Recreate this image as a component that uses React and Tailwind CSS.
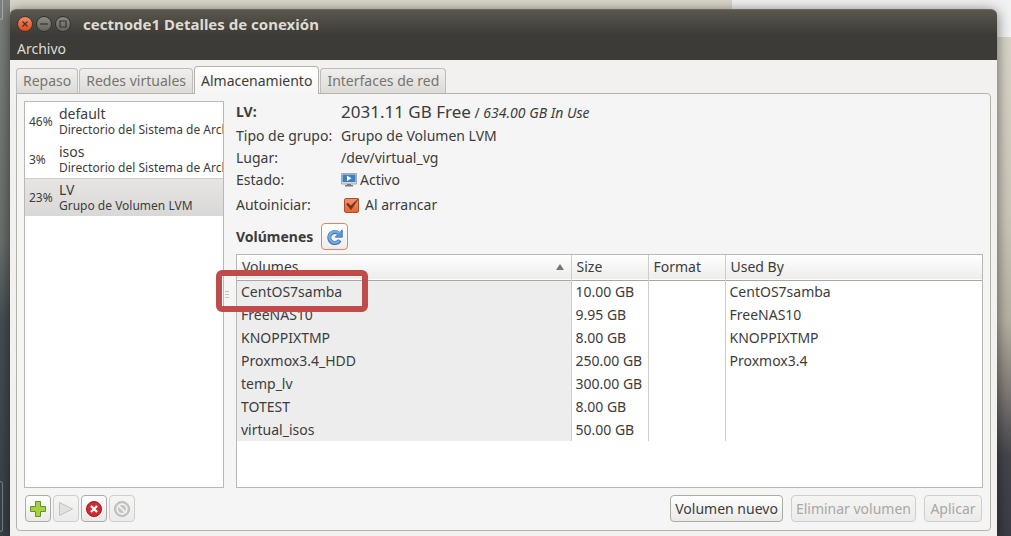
const pools = [
  { used: "46%", name: "default", type: "Directorio del Sistema de Archivos" },
  { used: "3%", name: "isos", type: "Directorio del Sistema de Archivos" },
  { used: "23%", name: "LV", type: "Grupo de Volumen LVM", selected: true },
];

const volumes = [
  { name: "CentOS7samba", size: "10.00 GB", usedBy: "CentOS7samba" },
  { name: "FreeNAS10", size: "9.95 GB", usedBy: "FreeNAS10" },
  { name: "KNOPPIXTMP", size: "8.00 GB", usedBy: "KNOPPIXTMP" },
  { name: "Proxmox3.4_HDD", size: "250.00 GB", usedBy: "Proxmox3.4" },
  { name: "temp_lv", size: "300.00 GB", usedBy: "" },
  { name: "TOTEST", size: "8.00 GB", usedBy: "" },
  { name: "virtual_isos", size: "50.00 GB", usedBy: "" },
];

const tabs = ["Repaso", "Redes virtuales", "Almacenamiento", "Interfaces de red"];

function WindowButton({ label, close, children }) {
  return (
    <button
      type="button"
      aria-label={label}
      className={
        close
          ? "h-4 w-4 rounded-full border border-[#3a3631] bg-linear-to-b from-[#f58a63] to-[#dd4814]"
          : "h-4 w-4 rounded-full border border-[#33322e] bg-linear-to-b from-[#8b8a83] to-[#64635d]"
      }
    >
      <svg viewBox="0 0 14 14" className="h-full w-full" fill="none" stroke="#37352f" strokeWidth="1.2">
        {children}
      </svg>
    </button>
  );
}

function TitleBar() {
  return (
    <header className="rounded-t-md border-t border-[#6b685e] bg-linear-to-b from-[#5a574d] via-[#3c3b37] to-[#3c3b37] text-[#dfdbd2]">
      <div className="flex h-7 items-center pl-[7px]">
        <div className="flex gap-[3px]">
          <WindowButton label="Cerrar" close>
            <path d="M4.500 4.500l5 5M9.500 4.500l-5 5" />
          </WindowButton>
          <WindowButton label="Minimizar">
            <path d="M3 7h8" />
          </WindowButton>
          <WindowButton label="Maximizar">
            <path d="M4 4h6v6h-6z" />
          </WindowButton>
        </div>
        <h1 className="ml-3 text-[15px] leading-5 font-bold">cectnode1 Detalles de conexión</h1>
      </div>
      <nav className="flex h-[22px] items-center pl-[7px]">
        <button type="button" className="text-sm leading-5">Archivo</button>
      </nav>
    </header>
  );
}

function Tabs() {
  return (
    <div role="tablist" className="relative z-10 flex items-end gap-px">
      {tabs.map((tab) => (
        <button
          key={tab}
          type="button"
          role="tab"
          aria-selected={tab === "Almacenamiento"}
          className={
            tab === "Almacenamiento"
              ? "-mb-px h-[28px] rounded-t border border-b-0 border-[#b5b2ac] bg-linear-to-b from-white to-[#f5f5f5] px-1.5 text-sm text-[#3c3c3c]"
              : "h-[25px] rounded-t border border-b-0 border-[#bfbdb8] bg-linear-to-b from-[#f0efed] to-[#dddbd8] px-1.5 text-sm text-[#77746e]"
          }
        >
          {tab}
        </button>
      ))}
    </div>
  );
}

function PoolList() {
  return (
    <ul className="w-[200px] shrink-0 overflow-hidden border border-[#bab8b3] bg-white">
      {pools.map((pool) => (
        <li
          key={pool.name}
          className={
            pool.selected
              ? "flex h-[38px] items-center border-t border-[#cfcdca] bg-linear-to-b from-[#e6e5e4] to-[#d9d8d6] pl-1"
              : "flex h-[38px] items-center border-t border-transparent pl-1"
          }
        >
          <span className="w-[30px] shrink-0 text-xs">{pool.used}</span>
          <div className="min-w-0 flex-1 overflow-hidden whitespace-nowrap">
            <div className="text-sm leading-4">{pool.name}</div>
            <div className="overflow-hidden text-xs leading-4">{pool.type}</div>
          </div>
        </li>
      ))}
    </ul>
  );
}

function PaneHandle() {
  return (
    <div role="separator" aria-orientation="vertical" className="flex w-3 flex-col justify-center gap-0.5 pl-px">
      <span className="h-px w-1 bg-[#c4c2be]" />
      <span className="h-px w-1 bg-[#c4c2be]" />
      <span className="h-px w-1 bg-[#c4c2be]" />
    </div>
  );
}

function MonitorIcon() {
  return (
    <svg viewBox="0 0 16 14" className="h-3.5 w-4">
      <path d="M0.500 0.500h15v10.500h-15z" fill="#d6d9dc" stroke="#a3a8ac" />
      <path d="M1.500 1.500h13v7.500h-13z" fill="#3f7fbe" />
      <path d="M6 2.500l4.500 2.800-4.500 2.800z" fill="#fff" />
      <path d="M6 11h4v1h2v1.500h-8v-1.500h2z" fill="#777c80" />
    </svg>
  );
}

function RefreshIcon() {
  return (
    <svg viewBox="0 0 16 16" className="h-4 w-4">
      <path
        d="M12.800 11.200A5.600 5.600 0 1 1 11.500 4.200"
        fill="none"
        stroke="#3a73b4"
        strokeWidth="4"
      />
      <path d="M15.300 0.800v7.400H8.200z" fill="#5b96d2" stroke="#3a73b4" strokeWidth="0.800" strokeLinejoin="round" />
      <path
        d="M12.300 11.700A5.600 5.600 0 1 1 12.200 4.500"
        fill="none"
        stroke="#74abe2"
        strokeWidth="2.400"
      />
    </svg>
  );
}

function PoolDetails() {
  return (
    <div className="grid grid-cols-[105px_1fr] text-sm leading-[22px]">
      <span className="pb-0.5 font-bold">LV:</span>
      <span className="h-6">
        <span className="text-[17px] leading-[22px]">2031.11 GB Free</span> / <i>634.00 GB In Use</i>
      </span>
      <span>Tipo de grupo:</span>
      <span>Grupo de Volumen LVM</span>
      <span>Lugar:</span>
      <span>/dev/virtual_vg</span>
      <span>Estado:</span>
      <span className="flex items-center gap-[3px]">
        <MonitorIcon />
        Activo
      </span>
      <span className="leading-7">Autoiniciar:</span>
      <label className="flex items-center gap-1.5 pl-[3px] leading-7">
        <span className="relative h-[15px] w-[15px]">
          <input
            type="checkbox"
            defaultChecked
            className="block h-[15px] w-[15px] appearance-none rounded-xs border border-[#a8502e] bg-linear-to-b from-[#f5916b] to-[#e8642f]"
          />
          <svg viewBox="0 0 16 16" className="pointer-events-none absolute inset-0 overflow-visible">
            <path d="M2.500 6.500L4.500 5.500 7 8.500 15.500 0.500 7.500 12.500z" fill="#6b3524" stroke="#6b3524" strokeWidth="0.500" />
          </svg>
        </span>
        Al arrancar
      </label>
    </div>
  );
}

function VolumeTable() {
  return (
    <div className="relative flex-1 border border-[#bab8b3] bg-white">
      <table className="w-full table-fixed border-collapse text-left text-sm">
        <colgroup>
          <col className="w-[334px]" />
          <col className="w-[77px]" />
          <col className="w-[77px]" />
          <col />
        </colgroup>
        <thead>
          <tr className="h-[25px] border-b border-[#aaa7a1] bg-linear-to-b from-white to-[#eeedec]">
            <th className="border-r border-[#cfcdca] px-[5px] font-normal">
              <div className="flex items-center justify-between">
                Volumes
                <svg viewBox="0 0 8 6" className="mr-0.5 h-1.5 w-2">
                  <path d="M4 0l4 6H0z" fill="#77746e" />
                </svg>
              </div>
            </th>
            <th className="border-r border-[#cfcdca] px-[5px] font-normal">Size</th>
            <th className="border-r border-[#cfcdca] px-[5px] font-normal">Format</th>
            <th className="px-[5px] font-normal">Used By</th>
          </tr>
        </thead>
        <tbody>
          {volumes.map((volume) => (
            <tr key={volume.name} className="h-[23px]">
              <td className="border-r border-[#cfcdca] bg-[#ededed] px-1">{volume.name}</td>
              <td className="border-r border-[#cfcdca] px-1 whitespace-nowrap">{volume.size}</td>
              <td className="border-r border-[#cfcdca] px-1" />
              <td className="px-1">{volume.usedBy}</td>
            </tr>
          ))}
        </tbody>
      </table>
      {/* Highlight around the first volume */}
      <div className="pointer-events-none absolute top-[15px] -left-[21px] h-[42px] w-[152px] rounded-md border-6 border-[#c04b4b]" />
    </div>
  );
}

function ToolButton({ label, disabled, children }) {
  return (
    <button
      type="button"
      aria-label={label}
      disabled={disabled}
      className="flex h-[27px] w-[26px] items-center justify-center rounded border border-[#aeaba5] bg-linear-to-b from-white to-[#eae9e8] disabled:border-[#d0cecb] disabled:from-[#f5f5f4] disabled:to-[#ecebea]"
    >
      <svg viewBox="0 0 16 16" className="h-4 w-4 shrink-0">
        {children}
      </svg>
    </button>
  );
}

function TextButton({ disabled, children }) {
  return (
    <button
      type="button"
      disabled={disabled}
      className="h-[27px] min-w-[58px] rounded border border-[#aeaba5] bg-linear-to-b from-white to-[#eae9e8] px-1 text-sm disabled:border-[#d0cecb] disabled:from-[#f5f5f4] disabled:to-[#ecebea] disabled:text-[#a9a7a3]"
    >
      {children}
    </button>
  );
}

function Footer() {
  return (
    <div className="mt-[7px] flex justify-between px-px">
      <div className="flex gap-0.5">
        <ToolButton label="Agregar grupo">
          <path d="M5.500.500h5v5h5v5h-5v5h-5v-5h-5v-5h5z" fill="#a9cf45" stroke="#5f9424" />
        </ToolButton>
        <ToolButton label="Iniciar grupo" disabled>
          <path d="M1.500 1.500l13 6.500-13 6.500z" fill="#e3e2e1" stroke="#c3c1be" />
        </ToolButton>
        <ToolButton label="Detener grupo">
          <circle cx="8" cy="8" r="7.500" fill="#cf2b35" stroke="#a3131e" />
          <path d="M5 5l6 6M11 5l-6 6" stroke="#fff" strokeWidth="2.200" />
        </ToolButton>
        <ToolButton label="Eliminar grupo" disabled>
          <circle cx="8" cy="8" r="7.500" fill="#c6c4c3" stroke="#bab8b7" />
          <circle cx="8" cy="8" r="4.800" fill="none" stroke="#f3f2f1" strokeWidth="1.800" />
          <path d="M4.600 4.600l6.800 6.800" stroke="#f3f2f1" strokeWidth="1.800" />
        </ToolButton>
      </div>
      <div className="flex gap-2">
        <TextButton>Volumen nuevo</TextButton>
        <TextButton disabled>Eliminar volumen</TextButton>
        <TextButton disabled>Aplicar</TextButton>
      </div>
    </div>
  );
}

export default function App() {
  return (
    <div className="relative flex min-h-screen overflow-hidden font-['Noto_Sans','Open_Sans',sans-serif] text-[#3c3c3c] [background:linear-gradient(#f2f2f2,#f2f2f2)_right_top/279px_37px_no-repeat,linear-gradient(#7d827f,#6b706d_45%,#474f54_60%,#394046)_left_top/10px_100%_no-repeat,linear-gradient(#dbd8cb,#cbc8ba_40%,#b5b1a2_60%,#857f7a_72%,#45454c_85%,#3b3c44)]">
      {/* Launcher tiles peeking in from the left edge */}
      <div className="absolute top-0 left-0 h-5 w-[3px] rounded-br border-r border-b border-[#a2a5a3]" />
      <div className="absolute bottom-1 left-0 h-[51px] w-[3px] rounded-r border border-l-0 border-[#71777a]" />
      <main className="mt-[9px] mr-3.5 ml-2.5 flex flex-1 flex-col rounded-t-md bg-[#f2f1f0] shadow-[0_2px_14px_rgba(0,0,0,0.55)]">
        <TitleBar />
        <div className="flex flex-1 flex-col px-1.5 pt-1.5 pb-[5px]">
          <Tabs />
          <section className="flex flex-1 flex-col rounded rounded-tl-none border border-[#b5b2ac] bg-[#f5f5f5] px-[7px] pt-[7px] pb-2">
            <div className="flex flex-1">
              <PoolList />
              <PaneHandle />
              <div className="flex flex-1 flex-col">
                <PoolDetails />
                <div className="my-1 flex items-center gap-2">
                  <h2 className="text-sm font-bold">Volúmenes</h2>
                  <button
                    type="button"
                    aria-label="Actualizar"
                    className="flex h-[27px] w-[27px] items-center justify-center rounded border border-[#e9825b] bg-linear-to-b from-white to-[#eeedec]"
                  >
                    <RefreshIcon />
                  </button>
                </div>
                <VolumeTable />
              </div>
            </div>
            <Footer />
          </section>
        </div>
      </main>
    </div>
  );
}
